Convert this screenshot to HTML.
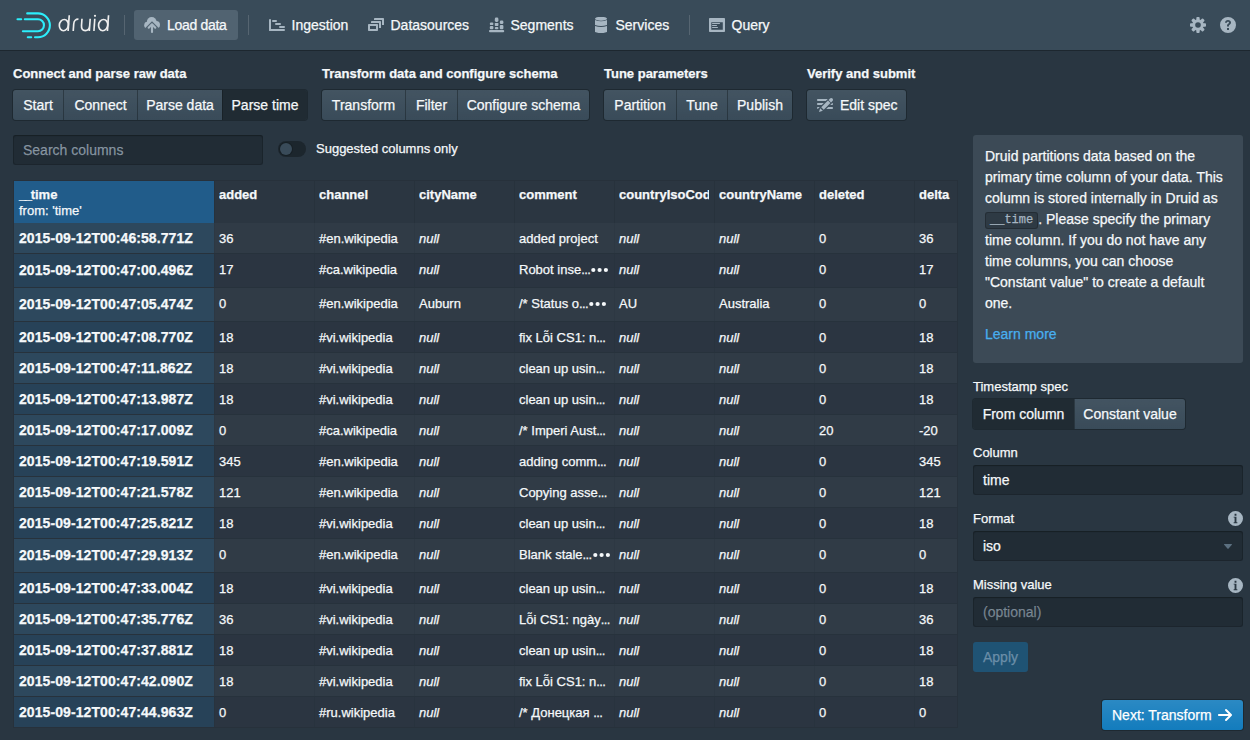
<!DOCTYPE html>
<html><head><meta charset="utf-8">
<style>
*{box-sizing:border-box}
html,body{margin:0;padding:0}
body{width:1250px;height:740px;overflow:hidden;background:#293641;font-family:"Liberation Sans",sans-serif;color:#f5f8fa;position:relative;font-size:14px}
.abs{position:absolute}
.t{position:absolute;white-space:nowrap}
#nav{left:0;top:0;width:1250px;height:50px;background:#394b59;box-shadow:0 1px 0 rgba(16,22,26,.45)}
.nsep{position:absolute;top:15px;width:1px;height:20px;background:rgba(255,255,255,.15)}
.nitem{position:absolute;top:0;height:50px;line-height:50px;font-size:14px;color:#f5f8fa;white-space:nowrap}
.ttl{position:absolute;top:66px;font-size:13px;font-weight:bold;white-space:nowrap;line-height:16px}
.bg{position:absolute;top:90px;height:30px;display:flex;border-radius:3px;box-shadow:0 0 0 1px rgba(16,22,26,.4)}
.btn{position:relative;height:30px;line-height:30px;background:#394b59;background-image:linear-gradient(to bottom,rgba(255,255,255,.05),rgba(255,255,255,0));font-size:14px;white-space:nowrap;text-align:center}
.btn+.btn{border-left:1px solid rgba(16,22,26,.4)}
.btn:first-child{border-radius:3px 0 0 3px}
.btn:last-child{border-radius:0 3px 3px 0}
.btn.act{background:#202b33;background-image:none}
.inp{position:absolute;height:30px;border-radius:3px;background:rgba(16,22,26,.3);box-shadow:inset 0 0 0 1px rgba(16,22,26,.3),inset 0 1px 1px rgba(16,22,26,.4);line-height:30px;padding-left:10px;font-size:14px}
#tbl{position:absolute;left:13px;top:180px;width:945px;height:548px;overflow:hidden;border:1px solid #27313b}
.hdr{position:absolute;left:0;top:0;height:42px;width:943px;background:#2b3641}
.hc{position:absolute;top:0;height:42px;padding:6px 5px 0 5px;font-size:13px;font-weight:bold;line-height:16px;overflow:hidden;white-space:nowrap;box-shadow:inset 1px 0 0 rgba(16,22,26,.12)}
.hc>div{overflow:hidden}
.row{position:absolute;left:0;width:943px;border-bottom:1px solid #27323c}
.row.last{border-bottom:none}
.row.odd{background:#303b46}
.row.even{background:#2b3541}
.c{position:absolute;top:0;height:100%;display:flex;align-items:center;padding:0 5px;font-size:13px;white-space:nowrap;overflow:hidden;box-shadow:inset 1px 0 0 rgba(16,22,26,.07)}
.c.tm{box-shadow:none}
.c.tm{left:0;width:200px;font-weight:bold;font-size:14px;letter-spacing:.08px}
.odd .c.tm{background:#2d485d}
.even .c.tm{background:#274258}
.c i{font-style:italic}
.row.tall .c>span{position:relative;top:-1px}
body{-webkit-text-stroke:0.25px currentColor}
.lbl{position:absolute;font-size:13px;white-space:nowrap;line-height:16px}
</style></head><body>

<div id="nav" class="abs">
<svg class="abs" style="left:0;top:0" width="120" height="50" viewBox="0 0 120 50">
<g fill="none" stroke="#2ceefb" stroke-width="2.1" stroke-linecap="round">
<path d="M27.2 13.4H38A11.9 11.9 0 0 1 38 37.2H35"/>
<path d="M24.8 19.3H38A5.95 5.95 0 0 1 38 31.2H22.9"/>
<path d="M17.5 19.3H21.2"/>
<path d="M27.8 37.2H31.2"/>
</g>
<g fill="none" stroke="#eeeeee" stroke-width="1.65" transform="skewX(-4)">
<ellipse cx="65.6" cy="25.1" rx="4.5" ry="5.6"/>
<path d="M70.3 15.2V31.1"/>
<path d="M75.4 31.1V24C75.4 20.6 77.2 19.1 79.8 19.2"/>
<path d="M83.3 18.8V25.6C83.3 29 85 30.6 87.4 30.6S91.5 29 91.5 25.6V18.8M91.5 25V31.1"/>
<path d="M96.1 18.8V31.1"/>
<ellipse cx="104.9" cy="25.1" rx="4.6" ry="5.6"/>
<path d="M109.6 15.2V31.1"/>
</g>
<circle cx="95.0" cy="15.8" r="1.1" fill="#eeeeee"/>
</svg>
<div class="nsep" style="left:124px"></div>
<div class="abs" style="left:134px;top:10px;width:104px;height:30px;border-radius:3px;background:rgba(138,155,168,.3)"></div>
<svg class="abs" style="left:144px;top:17px;" width="16" height="16" viewBox="0 0 16 16" fill="#a7b6c2"><defs><mask id="cum" maskUnits="userSpaceOnUse" x="0" y="0" width="16" height="16"><rect width="16" height="16" fill="#fff"/><path d="M8 4.2 L16 12.2 V16 H0 V12.2 Z" fill="#000"/></mask></defs><g mask="url(#cum)"><circle cx="3.6" cy="8.2" r="3.4"/><circle cx="7.7" cy="4.9" r="4.9"/><circle cx="12.2" cy="7.8" r="3.8"/><rect x="3.6" y="7" width="8.6" height="4.6"/></g><path d="M4.7 10.7 L8 7.3 L11.3 10.7" fill="none" stroke="#a7b6c2" stroke-width="2.1" stroke-linecap="round" stroke-linejoin="round"/><rect x="6.95" y="7.6" width="2.1" height="8.4" rx="1"/></svg>
<div class="nitem" style="left:167px;letter-spacing:-.3px">Load data</div>
<div class="nsep" style="left:248px"></div>
<svg class="abs" style="left:269px;top:17px;" width="16" height="16" viewBox="0 0 16 16" fill="#a7b6c2"><rect x="0" y="2" width="2" height="12" rx="1"/><rect x="0" y="12" width="16" height="2" rx="1"/><rect x="3" y="3" width="5" height="2" rx="1"/><rect x="6" y="6" width="6" height="2" rx="1"/><rect x="10" y="9" width="6" height="2" rx="1"/></svg>
<div class="nitem" style="left:291.5px">Ingestion</div>
<svg class="abs" style="left:368px;top:17px;" width="16" height="16" viewBox="0 0 16 16" fill="#a7b6c2"><path fill-rule="evenodd" d="M1 7h8c.55 0 1 .45 1 1v5c0 .55-.45 1-1 1H1c-.55 0-1-.45-1-1V8c0-.55.45-1 1-1z M2 9v3h6V9z"/><path d="M4 4h8c.55 0 1 .45 1 1v6h-2V6H3V5c0-.55.45-1 1-1z"/><path d="M7 1h8c.55 0 1 .45 1 1v6h-2V3H6V2c0-.55.45-1 1-1z"/></svg>
<div class="nitem" style="left:390.5px">Datasources</div>
<svg class="abs" style="left:489px;top:17px;" width="16" height="16" viewBox="0 0 16 16" fill="#a7b6c2"><rect x="0" y="13" width="15.2" height="2.2" rx="1"/><rect x="0.8" y="5.5" width="3.6" height="2.6" rx="1.2"/><rect x="0.8" y="8.9" width="3.6" height="3.3" rx="1"/><rect x="5.8" y="0.6" width="3.6" height="4.3" rx="1.4"/><rect x="5.8" y="5.9" width="3.6" height="3" rx=".6"/><rect x="5.8" y="9.9" width="3.6" height="2.3" rx="1"/><rect x="10.8" y="3.6" width="3.6" height="3.4" rx="1.3"/><rect x="10.8" y="8" width="3.6" height="4.2" rx="1"/></svg>
<div class="nitem" style="left:510.5px">Segments</div>
<svg class="abs" style="left:593px;top:17px;" width="16" height="16" viewBox="0 0 16 16" fill="#a7b6c2"><ellipse cx="8" cy="1.7" rx="6" ry="2"/><path d="M2 3 Q8 5.6 14 3 V8 Q8 10.1 2 8Z"/><path d="M2 9 Q8 11.2 14 9 V15 Q8 17.4 2 15Z"/></svg>
<div class="nitem" style="left:615.5px">Services</div>
<div class="nsep" style="left:689px"></div>
<svg class="abs" style="left:709px;top:17px;" width="16" height="16" viewBox="0 0 16 16" fill="#a7b6c2"><path fill-rule="evenodd" d="M1 1h14c.55 0 1 .45 1 1v12c0 .55-.45 1-1 1H1c-.55 0-1-.45-1-1V2c0-.55.45-1 1-1z M2.3 5.2v7.5h11.5V5.2z"/><rect x="3" y="5.9" width="8" height="1" rx=".5"/><rect x="3" y="8" width="5" height="1" rx=".5"/><rect x="3" y="10" width="6" height="1" rx=".5"/></svg>
<div class="nitem" style="left:731.5px">Query</div>
<svg class="abs" style="left:1190px;top:17px;" width="16" height="16" viewBox="0 0 16 16" fill="#a7b6c2"><g transform="translate(8 8)"><circle r="5.7"/><rect x="-1.65" y="-8" width="3.3" height="16" rx="0.9" transform="rotate(0)"/><rect x="-1.65" y="-8" width="3.3" height="16" rx="0.9" transform="rotate(45)"/><rect x="-1.65" y="-8" width="3.3" height="16" rx="0.9" transform="rotate(90)"/><rect x="-1.65" y="-8" width="3.3" height="16" rx="0.9" transform="rotate(135)"/><circle r="2.8" fill="#394b59"/></g></svg>
<svg class="abs" style="left:1220px;top:17px;" width="16" height="16" viewBox="0 0 16 16" fill="#a7b6c2"><path fill-rule="evenodd" d="M8 0a8 8 0 100 16A8 8 0 008 0z M7 11h2v2H7z M8 3c1.7 0 3 1.1 3 2.6 0 1.1-.6 1.7-1.3 2.2-.6.4-.7.6-.7 1.2v.5H7v-.6c0-1.1.4-1.6 1.1-2.1.6-.4.9-.7.9-1.2 0-.5-.4-.9-1-.9s-1.1.4-1.1 1.1H5c0-1.7 1.3-2.8 3-2.8z"/></svg>
</div>
<div class="ttl" style="left:13px">Connect and parse raw data</div>
<div class="bg" style="left:13px">
<div class="btn" style="width:50px">Start</div>
<div class="btn" style="width:74px">Connect</div>
<div class="btn" style="width:85px">Parse data</div>
<div class="btn act" style="width:85px">Parse time</div>
</div>
<div class="ttl" style="left:322px">Transform data and configure schema</div>
<div class="bg" style="left:322px">
<div class="btn" style="width:83px">Transform</div>
<div class="btn" style="width:52px">Filter</div>
<div class="btn" style="width:132px">Configure schema</div>
</div>
<div class="ttl" style="left:604px">Tune parameters</div>
<div class="bg" style="left:604px">
<div class="btn" style="width:72px">Partition</div>
<div class="btn" style="width:51px">Tune</div>
<div class="btn" style="width:65px">Publish</div>
</div>
<div class="ttl" style="left:807px">Verify and submit</div>
<div class="bg" style="left:807px"><div class="btn" style="width:99px;border-radius:3px;padding-left:26px;text-align:left;padding-left:33px">Edit spec</div></div>
<svg class="abs" style="left:817px;top:97px;" width="16" height="16" viewBox="0 0 16 16" fill="#a7b6c2"><path d="M1 8h3.76l2-2H1c-.55 0-1 .45-1 1s.45 1 1 1zm14.49-4.01c.31-.32.51-.76.51-1.24C16 1.78 15.22 1 14.25 1c-.48 0-.92.2-1.24.51l-1.44 1.44 2.47 2.47 1.45-1.43zM1 4h7.76l2-2H1c-.55 0-1 .45-1 1s.45 1 1 1zm0 6c-.55 0-1 .45-1 1 0 .48.35.86.8.96L2.76 10H1zm9.95-6.43l-6.69 6.69 2.47 2.47 6.69-6.69-2.47-2.47zm4.25 2.47L9.24 12H15c.55 0 1-.45 1-1s-.45-1-1-1h-3.76l2-2H15c.55 0 1-.45 1-1 0-.48-.35-.86-.8-.96zM2 15l3.86-1.13-2.73-2.73L2 15z"/></svg>
<div class="inp" style="left:13px;top:135px;width:250px;color:rgba(167,182,194,.72)">Search columns</div>
<div class="abs" style="left:278px;top:141px;width:28px;height:16px;border-radius:8px;background:rgba(16,22,26,.5)"></div>
<div class="abs" style="left:280px;top:143px;width:12px;height:12px;border-radius:6px;background:#394b59;box-shadow:0 0 0 1px rgba(16,22,26,.4)"></div>
<div class="lbl" style="left:316px;top:141px;font-size:13px">Suggested columns only</div>
<div id="tbl">
<div class="hdr">
<div class="hc" style="left:0;width:200px;background:#215c8a;box-shadow:none"><span style="letter-spacing:-1.4px">__</span>time<br><span style="font-weight:normal">from: 'time'</span></div>
<div class="hc" style="left:200px;width:100px"><div>added</div></div>
<div class="hc" style="left:300px;width:100px"><div>channel</div></div>
<div class="hc" style="left:400px;width:100px"><div>cityName</div></div>
<div class="hc" style="left:500px;width:100px"><div>comment</div></div>
<div class="hc" style="left:600px;width:100px"><div>countryIsoCode</div></div>
<div class="hc" style="left:700px;width:100px"><div>countryName</div></div>
<div class="hc" style="left:800px;width:100px"><div>deleted</div></div>
<div class="hc" style="left:900px;width:100px"><div>delta</div></div>
</div>
<div class="row odd" style="top:42px;height:31px">
<div class="c tm"><span>2015-09-12T00:46:58.771Z</span></div>
<div class="c" style="left:200px;width:100px"><span>36</span></div>
<div class="c" style="left:300px;width:100px"><span>#en.wikipedia</span></div>
<div class="c" style="left:400px;width:100px"><span><i>null</i></span></div>
<div class="c" style="left:500px;width:100px"><span>added project</span></div>
<div class="c" style="left:600px;width:100px"><span><i>null</i></span></div>
<div class="c" style="left:700px;width:100px"><span><i>null</i></span></div>
<div class="c" style="left:800px;width:100px"><span>0</span></div>
<div class="c" style="left:900px;width:100px"><span>36</span></div>
</div>
<div class="row even tall" style="top:73px;height:34px">
<div class="c tm"><span>2015-09-12T00:47:00.496Z</span></div>
<div class="c" style="left:200px;width:100px"><span>17</span></div>
<div class="c" style="left:300px;width:100px"><span>#ca.wikipedia</span></div>
<div class="c" style="left:400px;width:100px"><span><i>null</i></span></div>
<div class="c" style="left:500px;width:100px"><span>Robot inse<span style="letter-spacing:-.6px">...</span></span><svg width="18" height="16" viewBox="0 0 18 16" fill="#f5f8fa" style="margin-left:1px;flex:none;position:relative;top:-1px"><circle cx="2.3" cy="8" r="2.1"/><circle cx="8.6" cy="8" r="2.1"/><circle cx="14.9" cy="8" r="2.1"/></svg></div>
<div class="c" style="left:600px;width:100px"><span><i>null</i></span></div>
<div class="c" style="left:700px;width:100px"><span><i>null</i></span></div>
<div class="c" style="left:800px;width:100px"><span>0</span></div>
<div class="c" style="left:900px;width:100px"><span>17</span></div>
</div>
<div class="row odd tall" style="top:107px;height:34px">
<div class="c tm"><span>2015-09-12T00:47:05.474Z</span></div>
<div class="c" style="left:200px;width:100px"><span>0</span></div>
<div class="c" style="left:300px;width:100px"><span>#en.wikipedia</span></div>
<div class="c" style="left:400px;width:100px"><span>Auburn</span></div>
<div class="c" style="left:500px;width:100px"><span>/* Status o<span style="letter-spacing:-.6px">...</span></span><svg width="18" height="16" viewBox="0 0 18 16" fill="#f5f8fa" style="margin-left:1px;flex:none;position:relative;top:-1px"><circle cx="2.3" cy="8" r="2.1"/><circle cx="8.6" cy="8" r="2.1"/><circle cx="14.9" cy="8" r="2.1"/></svg></div>
<div class="c" style="left:600px;width:100px"><span>AU</span></div>
<div class="c" style="left:700px;width:100px"><span>Australia</span></div>
<div class="c" style="left:800px;width:100px"><span>0</span></div>
<div class="c" style="left:900px;width:100px"><span>0</span></div>
</div>
<div class="row even" style="top:141px;height:31px">
<div class="c tm"><span>2015-09-12T00:47:08.770Z</span></div>
<div class="c" style="left:200px;width:100px"><span>18</span></div>
<div class="c" style="left:300px;width:100px"><span>#vi.wikipedia</span></div>
<div class="c" style="left:400px;width:100px"><span><i>null</i></span></div>
<div class="c" style="left:500px;width:100px"><span>fix Lỗi CS1: n<span style="letter-spacing:-.6px">...</span></span></div>
<div class="c" style="left:600px;width:100px"><span><i>null</i></span></div>
<div class="c" style="left:700px;width:100px"><span><i>null</i></span></div>
<div class="c" style="left:800px;width:100px"><span>0</span></div>
<div class="c" style="left:900px;width:100px"><span>18</span></div>
</div>
<div class="row odd" style="top:172px;height:31px">
<div class="c tm"><span>2015-09-12T00:47:11.862Z</span></div>
<div class="c" style="left:200px;width:100px"><span>18</span></div>
<div class="c" style="left:300px;width:100px"><span>#vi.wikipedia</span></div>
<div class="c" style="left:400px;width:100px"><span><i>null</i></span></div>
<div class="c" style="left:500px;width:100px"><span>clean up usin<span style="letter-spacing:-.6px">...</span></span></div>
<div class="c" style="left:600px;width:100px"><span><i>null</i></span></div>
<div class="c" style="left:700px;width:100px"><span><i>null</i></span></div>
<div class="c" style="left:800px;width:100px"><span>0</span></div>
<div class="c" style="left:900px;width:100px"><span>18</span></div>
</div>
<div class="row even" style="top:203px;height:31px">
<div class="c tm"><span>2015-09-12T00:47:13.987Z</span></div>
<div class="c" style="left:200px;width:100px"><span>18</span></div>
<div class="c" style="left:300px;width:100px"><span>#vi.wikipedia</span></div>
<div class="c" style="left:400px;width:100px"><span><i>null</i></span></div>
<div class="c" style="left:500px;width:100px"><span>clean up usin<span style="letter-spacing:-.6px">...</span></span></div>
<div class="c" style="left:600px;width:100px"><span><i>null</i></span></div>
<div class="c" style="left:700px;width:100px"><span><i>null</i></span></div>
<div class="c" style="left:800px;width:100px"><span>0</span></div>
<div class="c" style="left:900px;width:100px"><span>18</span></div>
</div>
<div class="row odd" style="top:234px;height:31px">
<div class="c tm"><span>2015-09-12T00:47:17.009Z</span></div>
<div class="c" style="left:200px;width:100px"><span>0</span></div>
<div class="c" style="left:300px;width:100px"><span>#ca.wikipedia</span></div>
<div class="c" style="left:400px;width:100px"><span><i>null</i></span></div>
<div class="c" style="left:500px;width:100px"><span>/* Imperi Aust<span style="letter-spacing:-.6px">...</span></span></div>
<div class="c" style="left:600px;width:100px"><span><i>null</i></span></div>
<div class="c" style="left:700px;width:100px"><span><i>null</i></span></div>
<div class="c" style="left:800px;width:100px"><span>20</span></div>
<div class="c" style="left:900px;width:100px"><span>-20</span></div>
</div>
<div class="row even" style="top:265px;height:31px">
<div class="c tm"><span>2015-09-12T00:47:19.591Z</span></div>
<div class="c" style="left:200px;width:100px"><span>345</span></div>
<div class="c" style="left:300px;width:100px"><span>#en.wikipedia</span></div>
<div class="c" style="left:400px;width:100px"><span><i>null</i></span></div>
<div class="c" style="left:500px;width:100px"><span>adding comm<span style="letter-spacing:-.6px">...</span></span></div>
<div class="c" style="left:600px;width:100px"><span><i>null</i></span></div>
<div class="c" style="left:700px;width:100px"><span><i>null</i></span></div>
<div class="c" style="left:800px;width:100px"><span>0</span></div>
<div class="c" style="left:900px;width:100px"><span>345</span></div>
</div>
<div class="row odd" style="top:296px;height:31px">
<div class="c tm"><span>2015-09-12T00:47:21.578Z</span></div>
<div class="c" style="left:200px;width:100px"><span>121</span></div>
<div class="c" style="left:300px;width:100px"><span>#en.wikipedia</span></div>
<div class="c" style="left:400px;width:100px"><span><i>null</i></span></div>
<div class="c" style="left:500px;width:100px"><span>Copying asse<span style="letter-spacing:-.6px">...</span></span></div>
<div class="c" style="left:600px;width:100px"><span><i>null</i></span></div>
<div class="c" style="left:700px;width:100px"><span><i>null</i></span></div>
<div class="c" style="left:800px;width:100px"><span>0</span></div>
<div class="c" style="left:900px;width:100px"><span>121</span></div>
</div>
<div class="row even" style="top:327px;height:31px">
<div class="c tm"><span>2015-09-12T00:47:25.821Z</span></div>
<div class="c" style="left:200px;width:100px"><span>18</span></div>
<div class="c" style="left:300px;width:100px"><span>#vi.wikipedia</span></div>
<div class="c" style="left:400px;width:100px"><span><i>null</i></span></div>
<div class="c" style="left:500px;width:100px"><span>clean up usin<span style="letter-spacing:-.6px">...</span></span></div>
<div class="c" style="left:600px;width:100px"><span><i>null</i></span></div>
<div class="c" style="left:700px;width:100px"><span><i>null</i></span></div>
<div class="c" style="left:800px;width:100px"><span>0</span></div>
<div class="c" style="left:900px;width:100px"><span>18</span></div>
</div>
<div class="row odd tall" style="top:358px;height:34px">
<div class="c tm"><span>2015-09-12T00:47:29.913Z</span></div>
<div class="c" style="left:200px;width:100px"><span>0</span></div>
<div class="c" style="left:300px;width:100px"><span>#en.wikipedia</span></div>
<div class="c" style="left:400px;width:100px"><span><i>null</i></span></div>
<div class="c" style="left:500px;width:100px"><span>Blank stale<span style="letter-spacing:-.6px">...</span></span><svg width="18" height="16" viewBox="0 0 18 16" fill="#f5f8fa" style="margin-left:1px;flex:none;position:relative;top:-1px"><circle cx="2.3" cy="8" r="2.1"/><circle cx="8.6" cy="8" r="2.1"/><circle cx="14.9" cy="8" r="2.1"/></svg></div>
<div class="c" style="left:600px;width:100px"><span><i>null</i></span></div>
<div class="c" style="left:700px;width:100px"><span><i>null</i></span></div>
<div class="c" style="left:800px;width:100px"><span>0</span></div>
<div class="c" style="left:900px;width:100px"><span>0</span></div>
</div>
<div class="row even" style="top:392px;height:31px">
<div class="c tm"><span>2015-09-12T00:47:33.004Z</span></div>
<div class="c" style="left:200px;width:100px"><span>18</span></div>
<div class="c" style="left:300px;width:100px"><span>#vi.wikipedia</span></div>
<div class="c" style="left:400px;width:100px"><span><i>null</i></span></div>
<div class="c" style="left:500px;width:100px"><span>clean up usin<span style="letter-spacing:-.6px">...</span></span></div>
<div class="c" style="left:600px;width:100px"><span><i>null</i></span></div>
<div class="c" style="left:700px;width:100px"><span><i>null</i></span></div>
<div class="c" style="left:800px;width:100px"><span>0</span></div>
<div class="c" style="left:900px;width:100px"><span>18</span></div>
</div>
<div class="row odd" style="top:423px;height:31px">
<div class="c tm"><span>2015-09-12T00:47:35.776Z</span></div>
<div class="c" style="left:200px;width:100px"><span>36</span></div>
<div class="c" style="left:300px;width:100px"><span>#vi.wikipedia</span></div>
<div class="c" style="left:400px;width:100px"><span><i>null</i></span></div>
<div class="c" style="left:500px;width:100px"><span>Lỗi CS1: ngày<span style="letter-spacing:-.6px">...</span></span></div>
<div class="c" style="left:600px;width:100px"><span><i>null</i></span></div>
<div class="c" style="left:700px;width:100px"><span><i>null</i></span></div>
<div class="c" style="left:800px;width:100px"><span>0</span></div>
<div class="c" style="left:900px;width:100px"><span>36</span></div>
</div>
<div class="row even" style="top:454px;height:31px">
<div class="c tm"><span>2015-09-12T00:47:37.881Z</span></div>
<div class="c" style="left:200px;width:100px"><span>18</span></div>
<div class="c" style="left:300px;width:100px"><span>#vi.wikipedia</span></div>
<div class="c" style="left:400px;width:100px"><span><i>null</i></span></div>
<div class="c" style="left:500px;width:100px"><span>clean up usin<span style="letter-spacing:-.6px">...</span></span></div>
<div class="c" style="left:600px;width:100px"><span><i>null</i></span></div>
<div class="c" style="left:700px;width:100px"><span><i>null</i></span></div>
<div class="c" style="left:800px;width:100px"><span>0</span></div>
<div class="c" style="left:900px;width:100px"><span>18</span></div>
</div>
<div class="row odd" style="top:485px;height:31px">
<div class="c tm"><span>2015-09-12T00:47:42.090Z</span></div>
<div class="c" style="left:200px;width:100px"><span>18</span></div>
<div class="c" style="left:300px;width:100px"><span>#vi.wikipedia</span></div>
<div class="c" style="left:400px;width:100px"><span><i>null</i></span></div>
<div class="c" style="left:500px;width:100px"><span>fix Lỗi CS1: n<span style="letter-spacing:-.6px">...</span></span></div>
<div class="c" style="left:600px;width:100px"><span><i>null</i></span></div>
<div class="c" style="left:700px;width:100px"><span><i>null</i></span></div>
<div class="c" style="left:800px;width:100px"><span>0</span></div>
<div class="c" style="left:900px;width:100px"><span>18</span></div>
</div>
<div class="row even last" style="top:516px;height:30px">
<div class="c tm"><span>2015-09-12T00:47:44.963Z</span></div>
<div class="c" style="left:200px;width:100px"><span>0</span></div>
<div class="c" style="left:300px;width:100px"><span>#ru.wikipedia</span></div>
<div class="c" style="left:400px;width:100px"><span><i>null</i></span></div>
<div class="c" style="left:500px;width:100px"><span>/* Донецкая <span style="letter-spacing:-.6px">...</span></span></div>
<div class="c" style="left:600px;width:100px"><span><i>null</i></span></div>
<div class="c" style="left:700px;width:100px"><span><i>null</i></span></div>
<div class="c" style="left:800px;width:100px"><span>0</span></div>
<div class="c" style="left:900px;width:100px"><span>0</span></div>
</div>
</div>
<div class="abs" style="left:973px;top:135px;width:270px;height:228px;border-radius:3px;background:rgba(138,155,168,.2)"></div>
<div class="t" style="left:985px;top:146px;font-size:14px;line-height:21px">Druid partitions data based on the<br>primary time column of your data. This<br>column is stored internally in Druid as<br><span style="display:inline-block;font-family:'Liberation Mono';font-size:12px;line-height:17px;padding:0 5px;border-radius:3px;background:rgba(16,22,26,.3);box-shadow:inset 0 0 0 1px rgba(16,22,26,.35);color:#a7b6c2;vertical-align:1px">__time</span>. Please specify the primary<br>time column. If you do not have any<br>time columns, you can choose<br>"Constant value" to create a default<br>one.</div>
<div class="t" style="left:985px;top:324px;font-size:14px;line-height:21px;color:#48aff0">Learn more</div>
<div class="lbl" style="left:973px;top:379px">Timestamp spec</div>
<div class="bg" style="left:973px;top:399px"><div class="btn act" style="width:101px">From column</div><div class="btn" style="width:111px">Constant value</div></div>
<div class="lbl" style="left:973px;top:445px">Column</div>
<div class="inp" style="left:973px;top:465px;width:270px">time</div>
<div class="lbl" style="left:973px;top:511px">Format</div>
<svg class="abs" style="left:1228.2px;top:511px;" width="15" height="15" viewBox="0 0 16 16" fill="#a7b6c2"><path fill-rule="evenodd" d="M8 0a8 8 0 100 16A8 8 0 008 0z M7 3h2v2H7z M6 6h3v6h1v1H6v-1h1V7H6z"/></svg>
<div class="inp" style="left:973px;top:531px;width:270px">iso</div>
<svg class="abs" style="left:1220px;top:538px;" width="16" height="16" viewBox="0 0 16 16" fill="#5c7080"><path d="M12 6.5c0-.28-.22-.5-.5-.5h-7a.495.495 0 00-.37.83l3.5 4c.09.1.22.17.37.17s.28-.07.37-.17l3.5-4c.08-.09.13-.2.13-.33z"/></svg>
<div class="lbl" style="left:973px;top:577px">Missing value</div>
<svg class="abs" style="left:1228.2px;top:577.6px;" width="15" height="15" viewBox="0 0 16 16" fill="#a7b6c2"><path fill-rule="evenodd" d="M8 0a8 8 0 100 16A8 8 0 008 0z M7 3h2v2H7z M6 6h3v6h1v1H6v-1h1V7H6z"/></svg>
<div class="inp" style="left:973px;top:597px;width:270px;color:rgba(167,182,194,.6)">(optional)</div>
<div class="abs" style="left:973px;top:642px;width:55px;height:30px;border-radius:3px;background:rgba(19,124,189,.42);color:#6b8ea8;line-height:30px;text-align:center;font-size:14px">Apply</div>
<div class="abs" style="left:1102px;top:700px;width:141px;height:30px;border-radius:3px;background:#137cbd;background-image:linear-gradient(to bottom,rgba(255,255,255,.1),rgba(255,255,255,0));box-shadow:0 0 0 1px rgba(16,22,26,.4);line-height:30px;font-size:14px;padding-left:10px;color:#fff">Next: Transform</div>
<svg class="abs" style="left:1217px;top:707px;" width="16" height="16" viewBox="0 0 16 16" fill="#ffffff"><path d="M14.7 7.29l-5-5a.965.965 0 00-.71-.3 1.003 1.003 0 00-.71 1.71l3.3 3.29H2c-.55 0-1 .45-1 1s.45 1 1 1h9.59l-3.29 3.29c-.19.18-.3.43-.3.71a1.003 1.003 0 001.71.71l5-5c.18-.18.29-.43.29-.71 0-.28-.12-.52-.3-.7z"/></svg>
</body></html>
